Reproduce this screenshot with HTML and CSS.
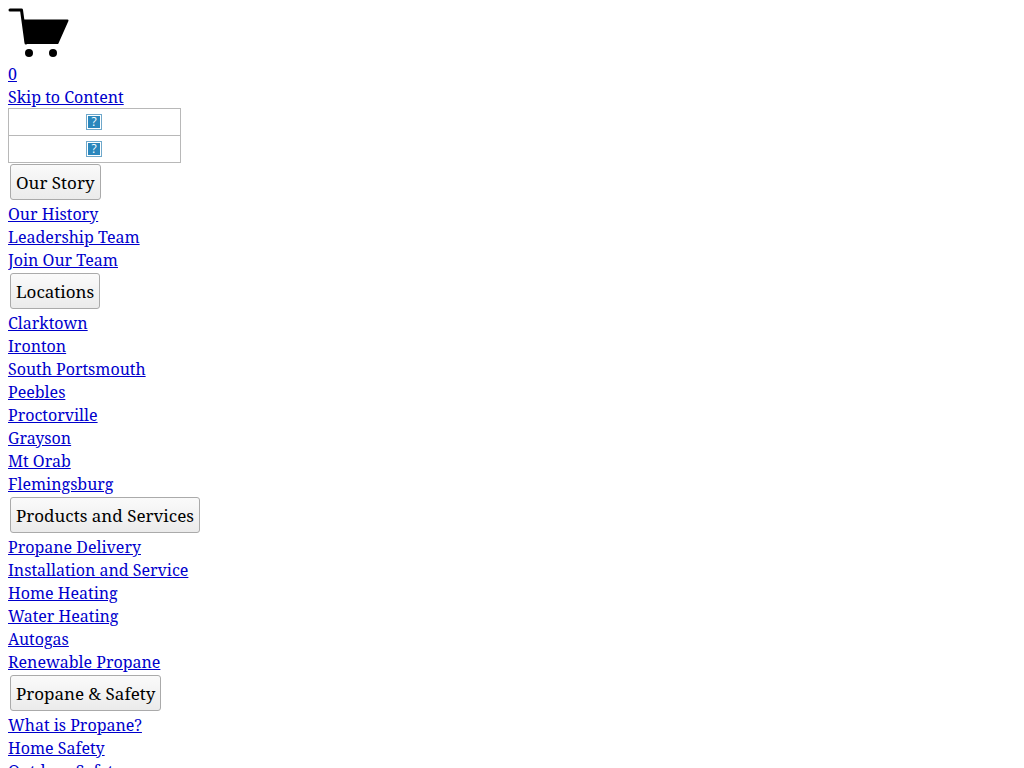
FILE: index.html
```html
<!DOCTYPE html>
<html lang="en">
<head>
    <meta charset="UTF-8">
    <meta name="viewport" content="width=device-width, initial-scale=1.0">
    <title>Propane Delivery and Service</title>
    <link rel="stylesheet" href="styles.css">
</head>
<body>
    <header>
        <a class="cart" href="#cart">
            <svg class="cart-icon" width="61" height="49" viewBox="0 0 61 49" aria-hidden="true">
                <path d="M2 2H13.5L18 35" fill="none" stroke="#000" stroke-width="3" stroke-linecap="round" stroke-linejoin="round"/>
                <path d="M16 12.5H59.5L49.5 35H18Z" stroke="#000" stroke-width="2" stroke-linejoin="round"/>
                <circle cx="21" cy="45" r="4"/>
                <circle cx="45" cy="45" r="4"/>
            </svg>
            <span>0</span>
        </a>
        <a class="skip" href="#content">Skip to Content</a>
        <a class="logo" href="#home" aria-label="Home">
            <svg width="16" height="16" viewBox="0 0 16 16" aria-hidden="true">
                <rect x="0.5" y="0.5" width="15" height="15" fill="#fff" stroke="#6fa8cb"/>
                <rect x="2" y="2" width="12" height="12" fill="#2b87bd"/>
                <text class="logo-mark" x="8" y="12">?</text>
            </svg>
        </a>
        <a class="logo" href="#home" aria-label="Home">
            <svg width="16" height="16" viewBox="0 0 16 16" aria-hidden="true">
                <rect x="0.5" y="0.5" width="15" height="15" fill="#fff" stroke="#6fa8cb"/>
                <rect x="2" y="2" width="12" height="12" fill="#2b87bd"/>
                <text class="logo-mark" x="8" y="12">?</text>
            </svg>
        </a>
    </header>
    <nav>
        <button type="button">Our Story</button>
        <ul>
            <li><a href="#history">Our History</a></li>
            <li><a href="#leadership">Leadership Team</a></li>
            <li><a href="#join">Join Our Team</a></li>
        </ul>
        <button type="button">Locations</button>
        <ul>
            <li><a href="#clarktown">Clarktown</a></li>
            <li><a href="#ironton">Ironton</a></li>
            <li><a href="#south-portsmouth">South Portsmouth</a></li>
            <li><a href="#peebles">Peebles</a></li>
            <li><a href="#proctorville">Proctorville</a></li>
            <li><a href="#grayson">Grayson</a></li>
            <li><a href="#mt-orab">Mt Orab</a></li>
            <li><a href="#flemingsburg">Flemingsburg</a></li>
        </ul>
        <button type="button">Products and Services</button>
        <ul>
            <li><a href="#delivery">Propane Delivery</a></li>
            <li><a href="#installation">Installation and Service</a></li>
            <li><a href="#home-heating">Home Heating</a></li>
            <li><a href="#water-heating">Water Heating</a></li>
            <li><a href="#autogas">Autogas</a></li>
            <li><a href="#renewable">Renewable Propane</a></li>
        </ul>
        <button type="button">Propane &amp; Safety</button>
        <ul>
            <li><a href="#what-is-propane">What is Propane?</a></li>
            <li><a href="#home-safety">Home Safety</a></li>
            <li><a href="#outdoor-safety">Outdoor Safety</a></li>
        </ul>
    </nav>
</body>
</html>
```
FILE: styles.css
```css
body {
    margin: 8px;
    background-color: white;
    color: black;
    font-family: "Noto Serif", "Liberation Serif", serif;
    font-size: 16px;
    line-height: 23px;
}
header, nav {
    display: flex;
    flex-direction: column;
    align-items: flex-start;
}
a {
    color: #0000cc;
}
.cart {
    display: flex;
    flex-direction: column;
    gap: 6px;
}
.cart-icon {
    fill: black;
}
.logo {
    display: flex;
    justify-content: center;
    align-items: center;
    box-sizing: border-box;
    width: 173px;
    height: 28px;
    margin-top: -1px;
    padding-right: 2px;
    border: 1px solid #b8b8b8;
}
.logo-mark {
    fill: white;
    font-family: "Open Sans", sans-serif;
    font-size: 12px;
    text-anchor: middle;
}
button {
    margin: 1px 2px 3px;
    padding: 6px 5px 4px;
    border: 1px solid #aaa;
    border-radius: 3px;
    background: linear-gradient(#fafafa, #ebebeb);
    color: black;
    font-family: inherit;
    font-size: 17px;
    line-height: 24px;
    cursor: pointer;
}
ul {
    margin: 0;
    padding: 0;
    list-style: none;
}
```
